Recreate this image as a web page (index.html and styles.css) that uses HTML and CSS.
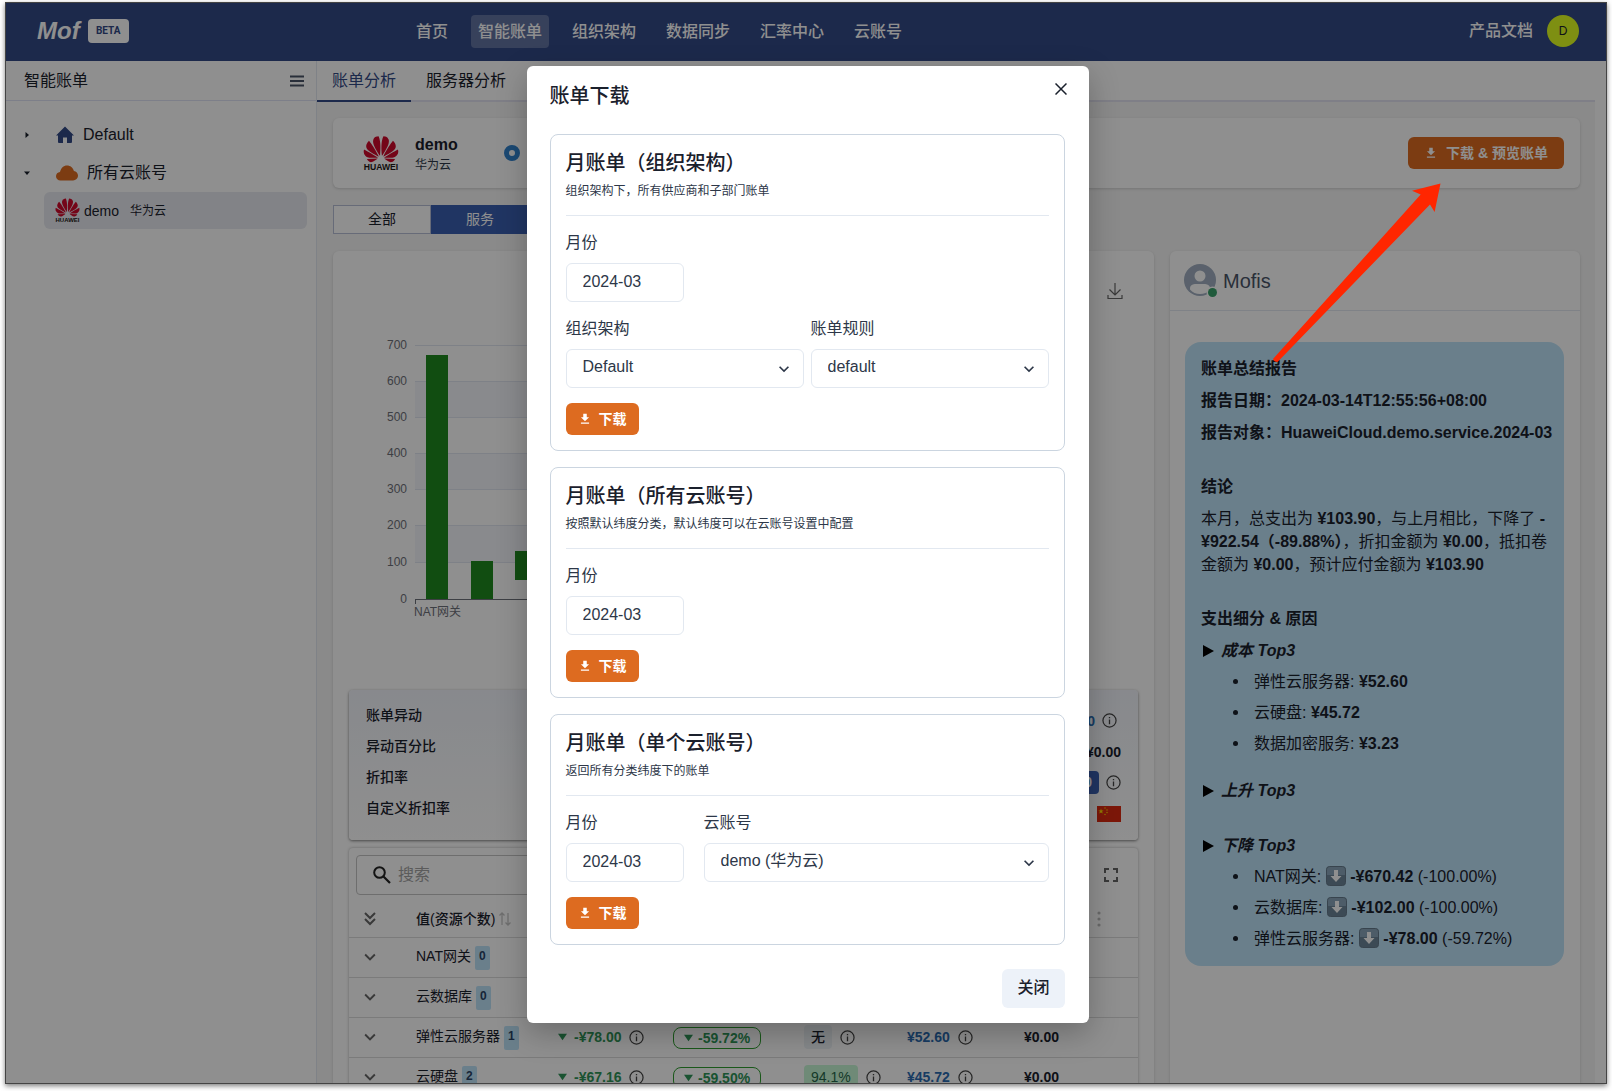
FILE: index.html
```html
<!DOCTYPE html>
<html lang="zh-CN">
<head>
<meta charset="utf-8">
<title>Mof 智能账单</title>
<link rel="stylesheet" href="styles.css">
</head>
<body>
<svg class="sprite" aria-hidden="true">
  <symbol id="huawei" viewBox="0 0 25 24">
    <path fill="#cf0a2c" transform="translate(0.5 -3)" d="M3.67 6.14S1.82 7.91 1.72 9.78v.35c.08 1.51 1.22 2.4 1.22 2.4 1.83 1.79 6.26 4.04 7.3 4.55 0 0 .06.03.1-.01l.02-.04v-.04C7.52 10.8 3.67 6.14 3.67 6.14zM9.65 18.6c-.02-.08-.1-.08-.1-.08l-7.38.26c.8 1.43 2.15 2.53 3.56 2.2.96-.25 3.16-1.78 3.88-2.3.06-.05.04-.09.04-.09zm.08-.78C6.49 15.63.21 12.28.21 12.28c-.15.46-.2.9-.21 1.3v.07c0 1.07.4 1.82.4 1.82.8 1.69 2.34 2.2 2.34 2.2.7.3 1.4.31 1.4.31.12.02 4.4 0 5.54 0 .05 0 .08-.05.08-.05v-.06c0-.03-.03-.05-.03-.05zM9.06 3.19a3.42 3.42 0 00-2.57 3.15v.41c.03.6.16 1.05.16 1.05.66 2.9 3.86 7.65 4.55 8.65.05.05.1.03.1.03a.1.1 0 00.06-.1c1.06-10.6-1.11-13.42-1.11-13.42-.32.02-1.19.23-1.19.23zm8.299 2.27s-.49-1.8-2.44-2.28c0 0-.57-.14-1.17-.22 0 0-2.18 2.81-1.12 13.43.01.07.06.08.06.08.07.03.1-.03.1-.03.72-1.03 3.9-5.76 4.55-8.64 0 0 .36-1.4.02-2.34zm-2.92 13.07s-.07 0-.09.05c0 0-.01.07.03.1.7.51 2.85 2 3.88 2.3 0 0 .16.05.43.06h.14c.69-.02 1.9-.37 3-2.26l-7.4-.25zm7.83-8.41c.14-2.06-1.94-3.97-1.94-3.98 0 0-3.85 4.66-6.67 10.8 0 0-.03.08.02.13l.04.01h.06c1.06-.53 5.46-2.77 7.28-4.54 0 0 1.15-.93 1.21-2.42zm1.52 2.14s-6.28 3.37-9.52 5.55c0 0-.05.04-.03.11 0 0 .03.06.07.06 1.16 0 5.56 0 5.67-.02 0 0 .57-.02 1.27-.29 0 0 1.56-.5 2.37-2.27 0 0 .73-1.45.17-3.14z"/>
    <text x="12.5" y="23.8" text-anchor="middle" font-family="Liberation Sans, sans-serif" font-weight="700" font-size="6" fill="#231815">HUAWEI</text>
  </symbol>
  <symbol id="download" viewBox="0 0 24 24"><path fill="currentColor" d="M19 9h-4V3H9v6H5l7 7 7-7zM5 18v2h14v-2H5z"/></symbol>
  <symbol id="chevron" viewBox="0 0 24 24"><path fill="currentColor" d="M16.59 8.59 12 13.17 7.41 8.59 6 10l6 6 6-6z"/></symbol>
  <symbol id="info" viewBox="0 0 16 16"><circle cx="8" cy="8" r="7" fill="none" stroke="currentColor" stroke-width="1.3"/><path fill="none" stroke="currentColor" stroke-width="1.4" d="M8 7v5M8 4.2v1.5"/></symbol>
  <symbol id="down" viewBox="0 0 10 8"><path fill="currentColor" d="M0 0.5h10L5 7.5z"/></symbol>
  <symbol id="keydown" viewBox="0 0 20 20">
    <rect x="0.5" y="0.5" width="19" height="19" rx="3" fill="#6b8598" stroke="#64798b"/>
    <path fill="#89a5b9" d="M1 4q0-3 3-3h12q3 0 3 3v5H1z"/>
    <path fill="#fff" d="M8 4h4v6h3.500L10 16 4.500 10H8z"/>
  </symbol>
</svg>

<div class="app">
  <header class="topbar">
    <div class="brand"><span class="logo">Mof</span><span class="beta">BETA</span></div>
    <nav class="nav">
      <a href="#">首页</a>
      <a href="#" class="on">智能账单</a>
      <a href="#">组织架构</a>
      <a href="#">数据同步</a>
      <a href="#">汇率中心</a>
      <a href="#">云账号</a>
    </nav>
    <div class="user"><a href="#">产品文档</a><span class="avatar">D</span></div>
  </header>

  <div class="body">
    <aside class="side">
      <div class="side-head">
        <span>智能账单</span>
        <button class="bare" aria-label="菜单"><svg width="14" height="12" viewBox="0 0 14 12"><path stroke="#4a5568" stroke-width="2" d="M0 1.500h14M0 6h14M0 10.500h14"/></svg></button>
      </div>
      <ul class="tree">
        <li>
          <svg class="caret" viewBox="0 0 8 8"><path fill="#1a202c" d="M2.500 1v6L6 4z"/></svg>
          <svg width="18" height="18" viewBox="0 0 18 18"><path fill="#324986" d="M9 0.500 0 9.500h2V16q0 1 1 1h4v-5.500h4V17h4q1 0 1-1V9.500h2L13.500 5z"/></svg>
          <span class="node">Default</span>
        </li>
        <li>
          <svg class="caret" viewBox="0 0 8 8"><path fill="#1a202c" d="M1 2.500h6L4 6z"/></svg>
          <svg width="22" height="16" viewBox="0 0 22 16"><path fill="#dd6b20" d="M4.500 15.500C2 15.500 0 13.700 0 11.300 0 9 1.700 7.200 4 7 4.800 3.200 7.600 0.500 11 0.500c3.300 0 6 2.200 6.900 5.400 2.300.3 4.100 2.300 4.100 4.700 0 2.700-2.200 4.900-4.900 4.900z"/></svg>
          <span class="node">所有云账号</span>
        </li>
        <li class="leaf">
          <svg width="25" height="25"><use href="#huawei"/></svg>
          <span class="leaf-name">demo</span><span class="leaf-kind">华为云</span>
        </li>
      </ul>
    </aside>

    <main class="main">
      <div class="tabs" role="tablist">
        <button role="tab" class="tab on" aria-selected="true">账单分析</button>
        <button role="tab" class="tab" aria-selected="false">服务器分析</button>
      </div>
      <div class="content">
        <section class="card account">
          <svg width="36" height="35"><use href="#huawei"/></svg>
          <div class="account-name"><b>demo</b><span>华为云</span></div>
          <input type="radio" class="radio" checked aria-label="demo">
          <button class="btn orange wide"><svg width="14" height="14"><use href="#download"/></svg>下载 &amp; 预览账单</button>
        </section>

        <div class="switch">
          <button>全部</button><button class="on">服务</button>
        </div>

        <div class="columns">
          <section class="card report">
            <div class="chart">
              <svg class="plot" width="720" height="330" viewBox="0 0 720 330">
                <g fill="#f5f7fb"><rect x="66" y="60" width="640" height="36"/><rect x="66" y="132" width="640" height="36"/><rect x="66" y="204" width="640" height="37"/></g>
                <path stroke="#e0e6f1" d="M66 24.500h640M66 60.500h640M66 96.500h640M66 132.500h640M66 168.500h640M66 204.500h640M66 241.500h640"/>
                <g fill="#1f8a1f"><rect x="77" y="34" width="22" height="244"/><rect x="122" y="240" width="22" height="38"/><rect x="166" y="230" width="22" height="29"/></g>
                <path stroke="#6e7079" d="M66 278.500h640M66.500 278v5"/>
                <g class="axis" text-anchor="end">
                  <text x="58" y="28">700</text><text x="58" y="64">600</text><text x="58" y="100">500</text><text x="58" y="136">400</text>
                  <text x="58" y="172">300</text><text x="58" y="208">200</text><text x="58" y="245">100</text><text x="58" y="282">0</text>
                </g>
                <text class="axis" x="65" y="295">NAT网关</text>
              </svg>
              <button class="bare" aria-label="保存图片"><svg width="16" height="18" viewBox="0 0 16 18"><path fill="none" stroke="#666" stroke-width="1.200" d="M8 1v12M2.500 7.500 8 13l5.500-5.500M1 13v3.500h14V13"/></svg></button>
            </div>

            <div class="summary">
              <div class="sum-row"><span class="key-name">账单异动</span><span class="right blue">¥103.90 <svg class="i"><use href="#info"/></svg></span></div>
              <div class="sum-row"><span class="key-name">异动百分比</span><span class="right">¥0.00</span></div>
              <div class="sum-row"><span class="key-name">折扣率</span><span class="right"><span class="solid">100</span><svg class="i"><use href="#info"/></svg></span></div>
              <div class="sum-row"><span class="key-name">自定义折扣率</span><span class="right">
                <svg width="24" height="16" viewBox="0 0 24 16"><path fill="#de2910" d="M0 0h24v16H0z"/><path fill="#ffde00" d="m4 2.500.7 1.900h2L5.100 5.600l.6 2L4 6.400 2.300 7.600l.6-2L1.300 4.400h2z"/><g fill="#ffde00"><circle cx="8" cy="2" r=".7"/><circle cx="10" cy="4" r=".7"/><circle cx="10" cy="6.500" r=".7"/><circle cx="8" cy="8.500" r=".7"/></g></svg></span></div>
            </div>

            <div class="grid">
              <div class="tools">
                <label class="search"><svg width="18" height="18" viewBox="0 0 18 18"><circle cx="6.500" cy="6.500" r="5.300" fill="none" stroke="#222" stroke-width="2"/><path stroke="#222" stroke-width="2.200" d="m10.500 10.500 6.500 6.500"/></svg><input type="text" placeholder="搜索" aria-label="搜索"></label>
                <button class="bare" aria-label="全屏"><svg width="14" height="14" viewBox="0 0 14 14"><path fill="none" stroke="#666" stroke-width="2" d="M1 5V1h4M9 1h4v4M13 9v4H9M5 13H1V9"/></svg></button>
              </div>
              <table>
                <colgroup><col class="c0"><col class="c1"><col class="c2"><col class="c3"><col class="c4"><col class="c5"><col></colgroup>
                <thead><tr>
                  <th class="tgl"><svg width="14" height="16" viewBox="0 0 14 16"><path fill="none" stroke="#666" stroke-width="2" d="m2 2 5 5 5-5M2 8l5 5 5-5"/></svg></th>
                  <th>值(资源个数) <svg class="sort" width="12" height="14" viewBox="0 0 12 14"><path fill="none" stroke="#c4c4c4" stroke-width="1.300" d="M3 13V1M.5 3.500 3 1l2.500 2.500M9 1v12M6.500 10.500 9 13l2.500-2.500"/></svg></th>
                  <th></th><th></th><th></th><th></th>
                  <th class="more"><svg width="4" height="16" viewBox="0 0 4 16"><g fill="#bdbdbd"><circle cx="2" cy="2" r="1.600"/><circle cx="2" cy="8" r="1.600"/><circle cx="2" cy="14" r="1.600"/></g></svg></th>
                </tr></thead>
                <tbody>
                  <tr><td class="tgl"><svg width="22" height="22"><use href="#chevron"/></svg></td><td>NAT网关<sup class="num">0</sup></td><td></td><td></td><td></td><td></td><td></td></tr>
                  <tr><td class="tgl"><svg width="22" height="22"><use href="#chevron"/></svg></td><td>云数据库<sup class="num">0</sup></td><td></td><td></td><td></td><td></td><td></td></tr>
                  <tr><td class="tgl"><svg width="22" height="22"><use href="#chevron"/></svg></td><td>弹性云服务器<sup class="num">1</sup></td>
                    <td><span class="val green"><svg class="t"><use href="#down"/></svg>-¥78.00 <svg class="i"><use href="#info"/></svg></span></td>
                    <td><span class="pill"><svg class="t"><use href="#down"/></svg>-59.72%</span></td>
                    <td><span class="val"><span class="tag">无</span><svg class="i"><use href="#info"/></svg></span></td>
                    <td><span class="val blue">¥52.60 <svg class="i"><use href="#info"/></svg></span></td>
                    <td><b>¥0.00</b></td></tr>
                  <tr><td class="tgl"><svg width="22" height="22"><use href="#chevron"/></svg></td><td>云硬盘<sup class="num">2</sup></td>
                    <td><span class="val green"><svg class="t"><use href="#down"/></svg>-¥67.16 <svg class="i"><use href="#info"/></svg></span></td>
                    <td><span class="pill"><svg class="t"><use href="#down"/></svg>-59.50%</span></td>
                    <td><span class="val"><span class="tag ok">94.1%</span><svg class="i"><use href="#info"/></svg></span></td>
                    <td><span class="val blue">¥45.72 <svg class="i"><use href="#info"/></svg></span></td>
                    <td><b>¥0.00</b></td></tr>
                </tbody>
              </table>
            </div>
          </section>

          <section class="card mofis">
            <div class="mofis-head">
              <svg width="34" height="33" viewBox="0 0 34 33"><circle cx="16" cy="16" r="16" fill="#a0aec0"/><circle cx="16" cy="12" r="5.500" fill="#fff"/><path fill="#fff" d="M6 25.500v-1C6 21 9 20 12 20h8c3 0 6 1 6 4.500v1c-2.600 3-6 4.500-10 4.500s-7.400-1.500-10-4.500z"/><circle cx="28.500" cy="28.500" r="6" fill="#fff"/><circle cx="28.500" cy="28.500" r="4.500" fill="#38a169"/></svg>
              <span>Mofis</span>
            </div>
            <div class="bubble">
              <p><b>账单总结报告</b></p>
              <p><b>报告日期：2024-03-14T12:55:56+08:00</b></p>
              <p class="end"><b>报告对象：HuaweiCloud.demo.service.2024-03</b></p>
              <p><b>结论</b></p>
              <p class="end">本月，总支出为 <b>¥103.90</b>，与上月相比，下降了 <b>-</b><br><b>¥922.54（-89.88%）</b>，折扣金额为 <b>¥0.00</b>，抵扣卷<br>金额为 <b>¥0.00</b>，预计应付金额为 <b>¥103.90</b></p>
              <p><b>支出细分 &amp; 原因</b></p>
              <p class="top"><svg width="11" height="12" viewBox="0 0 11 12"><path d="M0 0v12l11-6z"/></svg>成本 Top3</p>
              <ul>
                <li><span>弹性云服务器: <b>¥52.60</b></span></li>
                <li><span>云硬盘: <b>¥45.72</b></span></li>
                <li><span>数据加密服务: <b>¥3.23</b></span></li>
              </ul>
              <p class="top end"><svg width="11" height="12" viewBox="0 0 11 12"><path d="M0 0v12l11-6z"/></svg>上升 Top3</p>
              <p class="top"><svg width="11" height="12" viewBox="0 0 11 12"><path d="M0 0v12l11-6z"/></svg>下降 Top3</p>
              <ul>
                <li><span>NAT网关: <svg class="key"><use href="#keydown"/></svg> <b>-¥670.42</b> (-100.00%)</span></li>
                <li><span>云数据库: <svg class="key"><use href="#keydown"/></svg> <b>-¥102.00</b> (-100.00%)</span></li>
                <li><span>弹性云服务器: <svg class="key"><use href="#keydown"/></svg> <b>-¥78.00</b> (-59.72%)</span></li>
              </ul>
            </div>
          </section>
        </div>
      </div>
    </main>
  </div>

  <div class="overlay">
    <div class="modal" role="dialog" aria-modal="true" aria-labelledby="dlg">
      <div class="modal-head">
        <h2 id="dlg">账单下载</h2>
        <button class="bare" aria-label="关闭窗口"><svg width="12" height="12" viewBox="0 0 12 12"><path stroke="#1a202c" stroke-width="1.500" d="m.5.500 11 11M11.500.500l-11 11"/></svg></button>
      </div>

      <form class="box">
        <h3>月账单（组织架构）</h3>
        <p class="hint">组织架构下，所有供应商和子部门账单</p>
        <div class="fields">
          <div class="field month"><label for="m1">月份</label><input id="m1" type="text" value="2024-03"></div>
        </div>
        <div class="fields tight">
          <div class="field grow"><label for="org">组织架构</label><div class="select"><select id="org"><option>Default</option></select><svg width="20" height="20"><use href="#chevron"/></svg></div></div>
          <div class="field grow"><label for="rule">账单规则</label><div class="select"><select id="rule"><option>default</option></select><svg width="20" height="20"><use href="#chevron"/></svg></div></div>
        </div>
        <button type="button" class="btn orange"><svg width="14" height="14"><use href="#download"/></svg>下载</button>
      </form>

      <form class="box">
        <h3>月账单（所有云账号）</h3>
        <p class="hint">按照默认纬度分类，默认纬度可以在云账号设置中配置</p>
        <div class="fields">
          <div class="field month"><label for="m2">月份</label><input id="m2" type="text" value="2024-03"></div>
        </div>
        <button type="button" class="btn orange"><svg width="14" height="14"><use href="#download"/></svg>下载</button>
      </form>

      <form class="box">
        <h3>月账单（单个云账号）</h3>
        <p class="hint">返回所有分类纬度下的账单</p>
        <div class="fields">
          <div class="field month"><label for="m3">月份</label><input id="m3" type="text" value="2024-03"></div>
          <div class="field grow"><label for="acc">云账号</label><div class="select"><select id="acc"><option>demo (华为云)</option></select><svg width="20" height="20"><use href="#chevron"/></svg></div></div>
        </div>
        <button type="button" class="btn orange"><svg width="14" height="14"><use href="#download"/></svg>下载</button>
      </form>

      <div class="modal-foot"><button class="btn close">关闭</button></div>
    </div>
  </div>

  <svg class="pointer" width="170" height="182" viewBox="0 0 170 182" aria-hidden="true"><path fill="#ff2600" d="M168.500 1.500 140 8.700l8.700 3.800L1 177q1 3 4.500 3L158 22.500l4.600 7.500z"/></svg>
</div>
</body>
</html>
```
FILE: styles.css
```css
* { box-sizing: border-box; }

body {
  margin: 0;
  padding: 3px 6px 8px;
  background: #fff;
  color: #1a202c;
  font: 16px/24px "Liberation Sans", "Noto Sans CJK SC", sans-serif;
}

button, input, select { font: inherit; color: inherit; margin: 0; }
a { color: inherit; text-decoration: none; }
svg { flex: none; display: block; }
h2, h3, p, ul { margin: 0; padding: 0; }
ul { list-style: none; }
.sprite { display: none; }
.bare { border: 0; padding: 0; background: none; }

.app {
  position: relative;
  display: flex;
  flex-direction: column;
  height: calc(100vh - 11px);
  overflow: hidden;
  box-shadow: 0 0 0 1px #444, 0 2px 5px 1px rgba(0, 0, 0, .5);
}

/* Top bar */
.topbar {
  display: grid;
  grid-template-columns: 403px 1fr auto;
  align-items: center;
  height: 58px;
  flex: none;
  padding: 0 27px 2px 0;
  background: #324986;
  color: #fff;
  font-weight: 500;
}
.brand { display: flex; align-items: center; gap: 8px; padding-left: 31px; }
.logo { font-size: 24px; font-weight: 700; font-style: italic; }
.beta {
  width: 41px;
  border-radius: 4px;
  background: #fff;
  color: #324986;
  font: 700 10px/24px Roboto, sans-serif;
  text-align: center;
}
.nav { display: flex; gap: 16px; }
.nav a { padding: 0 7px; line-height: 33px; border-radius: 4px; }
.nav .on { background: rgba(255, 255, 255, .24); }
.user { display: flex; align-items: center; gap: 14px; }
.avatar {
  width: 32px;
  border-radius: 50%;
  background: #e0ff20;
  color: #1a202c;
  font: 12px/32px "Liberation Sans", sans-serif;
  text-align: center;
}

.body { display: flex; flex: 1; min-height: 0; }

/* Sidebar */
.side { width: 311px; flex: none; background: #fff; border-right: 1px solid #e2e8f0; }
.side-head {
  display: flex;
  justify-content: space-between;
  align-items: center;
  height: 40px;
  padding: 0 12px 0 18px;
  border-bottom: 1px solid #dfe3f5;
}
.tree { padding: 15px 9px 0 17px; }
.tree li { display: flex; align-items: center; height: 38px; }
.caret { width: 8px; height: 8px; margin-right: 25px; }
.node { padding-left: 9px; }
.tree .leaf { height: 37px; margin-left: 21px; padding-left: 11px; border-radius: 6px; background: #e8eaf0; font-size: 14px; }
.leaf-name { padding-left: 4px; }
.leaf-kind { padding-left: 11px; font-size: 12px; }

/* Main */
.main { flex: 1; min-width: 0; padding-right: 11px; background: #fff; display: flex; flex-direction: column; }
.tabs { display: flex; flex: none; height: 41px; border-bottom: 2px solid #e2e2f0; }
.tab { height: 41px; padding: 0 15px; border: 0; border-bottom: 2px solid transparent; background: none; }
.tab.on { color: #324986; border-color: #324986; }
.content { flex: 1; min-height: 0; padding: 16px 15px 0 16px; background: #f6f6f6; overflow: hidden; display: flex; flex-direction: column; }
.card { background: #fff; border-radius: 6px; box-shadow: 0 1px 3px rgba(0, 0, 0, .16); }

.account { display: flex; align-items: center; flex: none; height: 70px; padding: 0 16px 0 30px; }
.account-name { display: flex; flex-direction: column; padding: 4px 46px 0 16px; line-height: 20px; }
.account-name span { font-size: 12px; color: #2d3748; }
.radio { appearance: none; width: 16px; height: 16px; border: 5px solid #3182ce; border-radius: 50%; background: #fff; }

.btn { display: inline-flex; align-items: center; border: 0; border-radius: 6px; font-weight: 700; }
.orange { gap: 7px; height: 32px; padding: 0 12px 1px 12px; background: #dd6b20; color: #fff; font-size: 14px; font-weight: 600; }
.wide { margin-left: auto; gap: 8px; padding: 0 16px 1px; }

.switch { display: flex; flex: none; margin: 17px 0; }
.switch button { width: 98px; height: 29px; padding: 0 0 2px; border: 1px solid #b8bfd6; background: #fff; font-size: 14px; }
.switch .on { border-color: #3a5fb0; background: #3a5fb0; color: #fff; }

.columns { display: flex; flex: 1; min-height: 0; gap: 16px; }
.report { flex: 1; min-width: 0; padding: 0 16px; overflow: hidden; border-radius: 6px 6px 0 0; }
.mofis { width: 410px; flex: none; border-radius: 6px 6px 0 0; }

/* Chart */
.chart { display: flex; justify-content: space-between; align-items: flex-start; height: 439px; padding: 31px 15px 0 0; }
.plot { margin: 39px 0 0 0; }
.axis { font-size: 12px; fill: #6e7079; }

/* Summary */
.summary {
  height: 150px;
  padding: 15px 17px;
  border-radius: 4px;
  background: linear-gradient(#f2f5fb, #fff);
  box-shadow: 0 1px 3px rgba(0, 0, 0, .5);
  font-size: 14px;
  font-weight: 500;
}
.sum-row { display: flex; justify-content: space-between; align-items: center; height: 31px; }
.key-name { padding-bottom: 11px; }
.right { display: flex; align-items: center; gap: 7px; font-weight: 700; }
.right.blue { padding-right: 4px; }
.solid { padding: 0 7px; border-radius: 4px; background: #3a5fb0; color: #fff; line-height: 23px; }
.i { width: 15px; height: 15px; color: #444; }

/* Table */
.grid { margin-top: 8px; border-radius: 4px; box-shadow: 0 0 3px rgba(0, 0, 0, .3); }
.tools { display: flex; align-items: center; justify-content: space-between; padding: 7px 20px 0 7px; }
.search { display: flex; align-items: center; gap: 7px; width: 260px; height: 40px; padding: 0 16px; border: 1px solid #c4c4c4; border-radius: 4px; }
.search input { width: 180px; border: 0; padding: 0; background: none; }
.search input::placeholder { color: #a3a3a3; }
table { width: 100%; border-collapse: collapse; table-layout: fixed; font-size: 14px; }
.c0 { width: 51px; }
.c1 { width: 142px; }
.c2 { width: 115px; }
.c3 { width: 131px; }
.c4 { width: 103px; }
.c5 { width: 117px; }
th, td { height: 40px; padding: 0 0 0 16px; border-bottom: 1px solid #dcdcdc; text-align: left; white-space: nowrap; }
th { height: 42px; padding-top: 7px; font-weight: 500; }
.tgl { padding-left: 10px; color: #666; }
th.tgl { padding-left: 14px; }
.more { padding-left: 89px; }
.sort { display: inline; vertical-align: -2px; }
.num {
  display: inline-block;
  margin-left: 4px;
  padding: 0 4px;
  height: 24px;
  border-radius: 2px;
  background: #bee3f8;
  color: #2a4365;
  font-size: 12px;
  font-weight: 700;
  line-height: 20px;
  vertical-align: middle;
}
.val { display: flex; align-items: center; gap: 8px; font-weight: 700; }
.t { width: 9px; height: 8px; margin-right: -1px; }
.green { color: #2f9558; }
.blue { color: #2b6cb0; }
.pill { display: inline-flex; align-items: center; gap: 6px; height: 22px; padding: 0 10px; border: 1px solid #2f9e2f; border-radius: 8px; color: #2f9558; font-weight: 700; vertical-align: middle; }
.tag { padding: 0 7px; border-radius: 4px; background: #edf2f7; font-weight: 500; line-height: 24px; }
.ok { background: #c6f6d5; color: #276749; font-weight: 400; }

/* Assistant */
.mofis-head { display: flex; align-items: center; gap: 5px; height: 60px; padding: 0 14px; border-bottom: 1px solid #e2e8f0; font-size: 20px; color: #4a5568; }
.bubble { margin: 31px 16px 0 15px; padding: 15px 0 16px 16px; border-radius: 16px; background: #bee3f8; line-height: 23px; white-space: nowrap; }
.bubble p { margin-bottom: 9px; }
.bubble .end { margin-bottom: 31px; }
.bubble .top { display: flex; align-items: center; gap: 7px; padding-left: 2px; margin-bottom: 8px; font-weight: 700; font-style: italic; }
.bubble .top.end { margin-bottom: 32px; }
.bubble ul { display: grid; gap: 8px; padding-left: 32px; }
.bubble ul + p { margin-top: 24px; }
.bubble li { display: flex; align-items: center; height: 23px; }
.bubble li::before { content: ""; width: 5px; height: 5px; margin-right: 16px; border-radius: 50%; background: #1a202c; }
.key { display: inline-block; width: 20px; height: 20px; vertical-align: -4px; }

/* Dialog */
.overlay { position: absolute; inset: 0; display: flex; justify-content: center; align-items: flex-start; padding: 63px 0 0 3px; background: rgba(0, 0, 0, .44); }
.modal { width: 562px; padding: 15px 24px 15px 23px; border-radius: 6px; background: #fff; box-shadow: 0 10px 30px rgba(0, 0, 0, .25); }
.modal-head { display: flex; justify-content: space-between; align-items: flex-start; height: 53px; }
.modal-head .bare { padding: 2px 0; margin-right: -2px; }
h2, h3 { font-size: 20px; font-weight: 500; }
h2 { line-height: 30px; }
.box { margin-bottom: 16px; padding: 16px 15px 15px; border: 1px solid #cbd5e0; border-radius: 8px; }
h3 { line-height: 24px; }
.hint { padding: 7px 0 15px; border-bottom: 1px solid #e2e8f0; font-size: 12px; line-height: 18px; color: #2d3748; }
.fields { display: flex; gap: 20px; padding: 15px 0; }
.fields.tight { gap: 7px; padding-top: 0; }
.field { display: flex; flex-direction: column; gap: 8px; color: #2d3748; }
.grow { flex: 1; }
.month { width: 118px; }
.field input, .field select { width: 100%; height: 39px; border: 1px solid #e2e8f0; border-radius: 6px; background: #fff; padding: 0 15px 2px 16px; }
.select { display: grid; align-items: center; }
.select > * { grid-area: 1 / 1; }
.select select { appearance: none; padding: 0 16px 3px; }
.select svg { justify-self: end; margin-right: 10px; pointer-events: none; }
.modal-foot { display: flex; justify-content: flex-end; padding-top: 8px; }
.close { height: 39px; padding: 0 15px 2px; background: #edf2f9; font-weight: 500; }

/* Callout arrow drawn over everything */
.pointer { position: absolute; top: 179px; right: 164px; }
```
